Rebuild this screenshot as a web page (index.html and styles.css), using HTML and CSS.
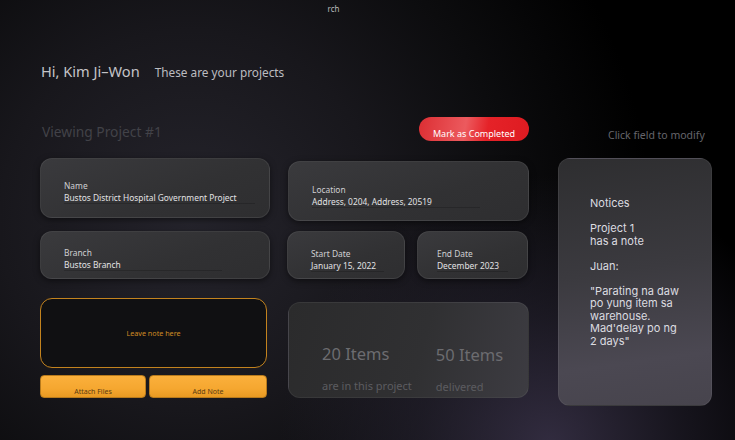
FILE: index.html
```html
<!DOCTYPE html>
<html lang="en">
<head>
<meta charset="UTF-8">
<meta name="viewport" content="width=device-width, initial-scale=1.0">
<title>Projects</title>
<link rel="stylesheet" href="styles.css">
</head>
<body>
    <div class="topbar">rch</div>

    <header class="greeting">
        <h1>Hi, Kim Ji&ndash;Won</h1>
        <p>These are your projects</p>
    </header>

    <div class="toolbar">
        <h2>Viewing Project #1</h2>
        <button type="button" class="complete-btn">Mark as Completed</button>
        <span class="hint">Click field to modify</span>
    </div>

    <main class="board">
        <div class="field field-name">
            <label>Name</label>
            <div class="value">Bustos District Hospital Government Project</div>
        </div>
        <div class="field field-location">
            <label>Location</label>
            <div class="value">Address, 0204, Address, 20519</div>
        </div>

        <aside class="notices">
            <p>Notices</p>
            <p>Project 1<br>has a note</p>
            <p>Juan:</p>
            <p>"Parating na daw po yung item sa warehouse. Mad'delay po ng 2 days"</p>
        </aside>

        <div class="field field-branch">
            <label>Branch</label>
            <div class="value">Bustos Branch</div>
        </div>
        <div class="dates">
            <div class="field field-start">
                <label>Start Date</label>
                <div class="value">January 15, 2022</div>
            </div>
            <div class="field field-end">
                <label>End Date</label>
                <div class="value">December 2023</div>
            </div>
        </div>

        <div class="note-box">
            <div class="note-input">Leave note here</div>
            <div class="note-actions">
                <button type="button" class="orange-btn attach">Attach Files</button>
                <button type="button" class="orange-btn">Add Note</button>
            </div>
        </div>
        <div class="items">
            <div class="stat">
                <div class="num">20 Items</div>
                <div class="desc">are in this project</div>
            </div>
            <div class="stat">
                <div class="num">50 Items</div>
                <div class="desc">delivered</div>
            </div>
        </div>
    </main>
</body>
</html>
```

FILE: styles.css
```css
html, body {
    height: 100%;
}

body {
    margin: 0;
    font-family: 'Noto Sans', 'Open Sans', sans-serif;
    color: #ddd;
    overflow: hidden;
    background:
        radial-gradient(circle at 550px 445px, rgba(58, 51, 74, 0.85) 0, rgba(42, 38, 54, 0.55) 130px, transparent 270px),
        radial-gradient(circle at 190px 220px, #25242c 0, #18171c 190px, #0c0c0e 320px, #000 460px);
    background-color: #000;
}

.topbar {
    height: 17px;
    text-align: center;
    font-size: 8px;
    line-height: 17px;
    color: #bbb;
    padding-right: 68px;
}

.greeting {
    display: flex;
    align-items: baseline;
    gap: 15px;
    padding: 44px 0 0 41px;
}

.greeting h1 {
    margin: 0;
    font-size: 14.6px;
    font-weight: 400;
    color: #c4c4c8;
}

.greeting p {
    margin: 0;
    font-size: 11.8px;
    color: #bcbcc0;
}

.toolbar {
    display: flex;
    align-items: center;
    margin-top: 36px;
    padding-left: 42px;
    height: 24px;
}

.toolbar h2 {
    margin: 4px 0 0;
    font-size: 13.8px;
    font-weight: 400;
    color: #424248;
    width: 377px;
}

.complete-btn {
    width: 110px;
    height: 24px;
    border: none;
    border-radius: 12px;
    background: linear-gradient(100deg, #dc2e33 0%, #ec5a5e 42%, #e52228 62%, #de1b21 100%);
    color: #fff;
    font-family: inherit;
    font-size: 9px;
    padding: 9px 0 0;
}

.hint {
    margin: 11px 0 0 79px;
    font-size: 10.5px;
    color: #66666c;
}

.board {
    display: grid;
    grid-template-columns: 230px 241px 165px;
    grid-template-rows: 60px 48px 106px;
    column-gap: 18px;
    row-gap: 13px;
    margin: 17px 0 0 40px;
}

.field {
    box-sizing: border-box;
    padding: 21px 0 0 23px;
    border-radius: 12px;
    border: 1px solid rgba(255, 255, 255, 0.07);
    background: linear-gradient(160deg, #3a3a3d 0%, #313133 60%, #2e2e30 100%);
    box-shadow: 0 2px 6px rgba(0, 0, 0, 0.5);
}

.field label {
    display: block;
    font-size: 8.4px;
    line-height: 12px;
    color: #cfcfd2;
}

.field .value {
    font-size: 8.4px;
    line-height: 11px;
    color: #e2e2e4;
    border-bottom: 1px solid rgba(0, 0, 0, 0.18);
    white-space: nowrap;
}

.field-name .value {
    width: 191px;
}

.field-location {
    margin-top: 3px;
    margin-bottom: -3px;
    padding-top: 22px;
}

.field-location .value {
    width: 168px;
}

.field-branch {
    padding-top: 15px;
}

.field-branch .value {
    width: 158px;
}

.dates {
    display: grid;
    grid-template-columns: 118px 111px;
    column-gap: 12px;
    margin-left: -1px;
}

.dates .field {
    padding-top: 16px;
}

.field-start .value {
    width: 73px;
}

.field-end {
    padding-left: 19px;
}

.field-end .value {
    width: 71px;
}

.notices {
    grid-column: 3;
    grid-row: 1 / 4;
    margin-left: 11px;
    height: 248px;
    box-sizing: border-box;
    padding: 38px 0 0 31px;
    border-radius: 12px;
    border: 1px solid rgba(255, 255, 255, 0.06);
    background: linear-gradient(172deg, #2e2e30 0%, #3b3a3f 45%, #4b4852 80%, #47444d 100%);
    font-family: 'Inter', 'Liberation Sans', sans-serif;
    font-size: 11px;
    line-height: 12.5px;
    color: #dcdce0;
}

.notices p {
    margin: 0 0 12.5px;
    width: 90px;
}

.note-box {
    display: flex;
    flex-direction: column;
    gap: 7px;
    margin-top: 6px;
    width: 227px;
}

.note-input {
    flex: 0 0 70px;
    box-sizing: border-box;
    border: 1px solid #c3831e;
    border-radius: 12px;
    background: #101012;
    color: #d08c24;
    font-size: 7.2px;
    display: flex;
    align-items: center;
    justify-content: center;
}

.note-actions {
    display: flex;
    gap: 3px;
}

.orange-btn {
    flex: 1;
    height: 23px;
    border: 1px solid #b87a1c;
    border-radius: 4px;
    background: linear-gradient(#fbb03c 0%, #f5a730 60%, #e99a22 100%);
    color: #5b3b12;
    font-family: inherit;
    font-size: 7px;
    padding: 10px 0 0;
}

.orange-btn.attach {
    flex: 0 0 106px;
}

.items {
    margin-top: 10px;
    height: 96px;
    box-sizing: border-box;
    display: flex;
    gap: 24px;
    padding: 39px 0 0 33px;
    border-radius: 12px;
    border: 1px solid rgba(255, 255, 255, 0.06);
    background: linear-gradient(105deg, #2b2b2c 0%, #303032 55%, #3d3c42 100%);
}

.stat .num {
    font-size: 16.5px;
    line-height: 24px;
    color: #6c6c70;
}

.stat .desc {
    margin-top: 12px;
    font-size: 11px;
    color: #5c5c60;
}

.stat:last-child .num {
    margin-top: 1px;
}
```
